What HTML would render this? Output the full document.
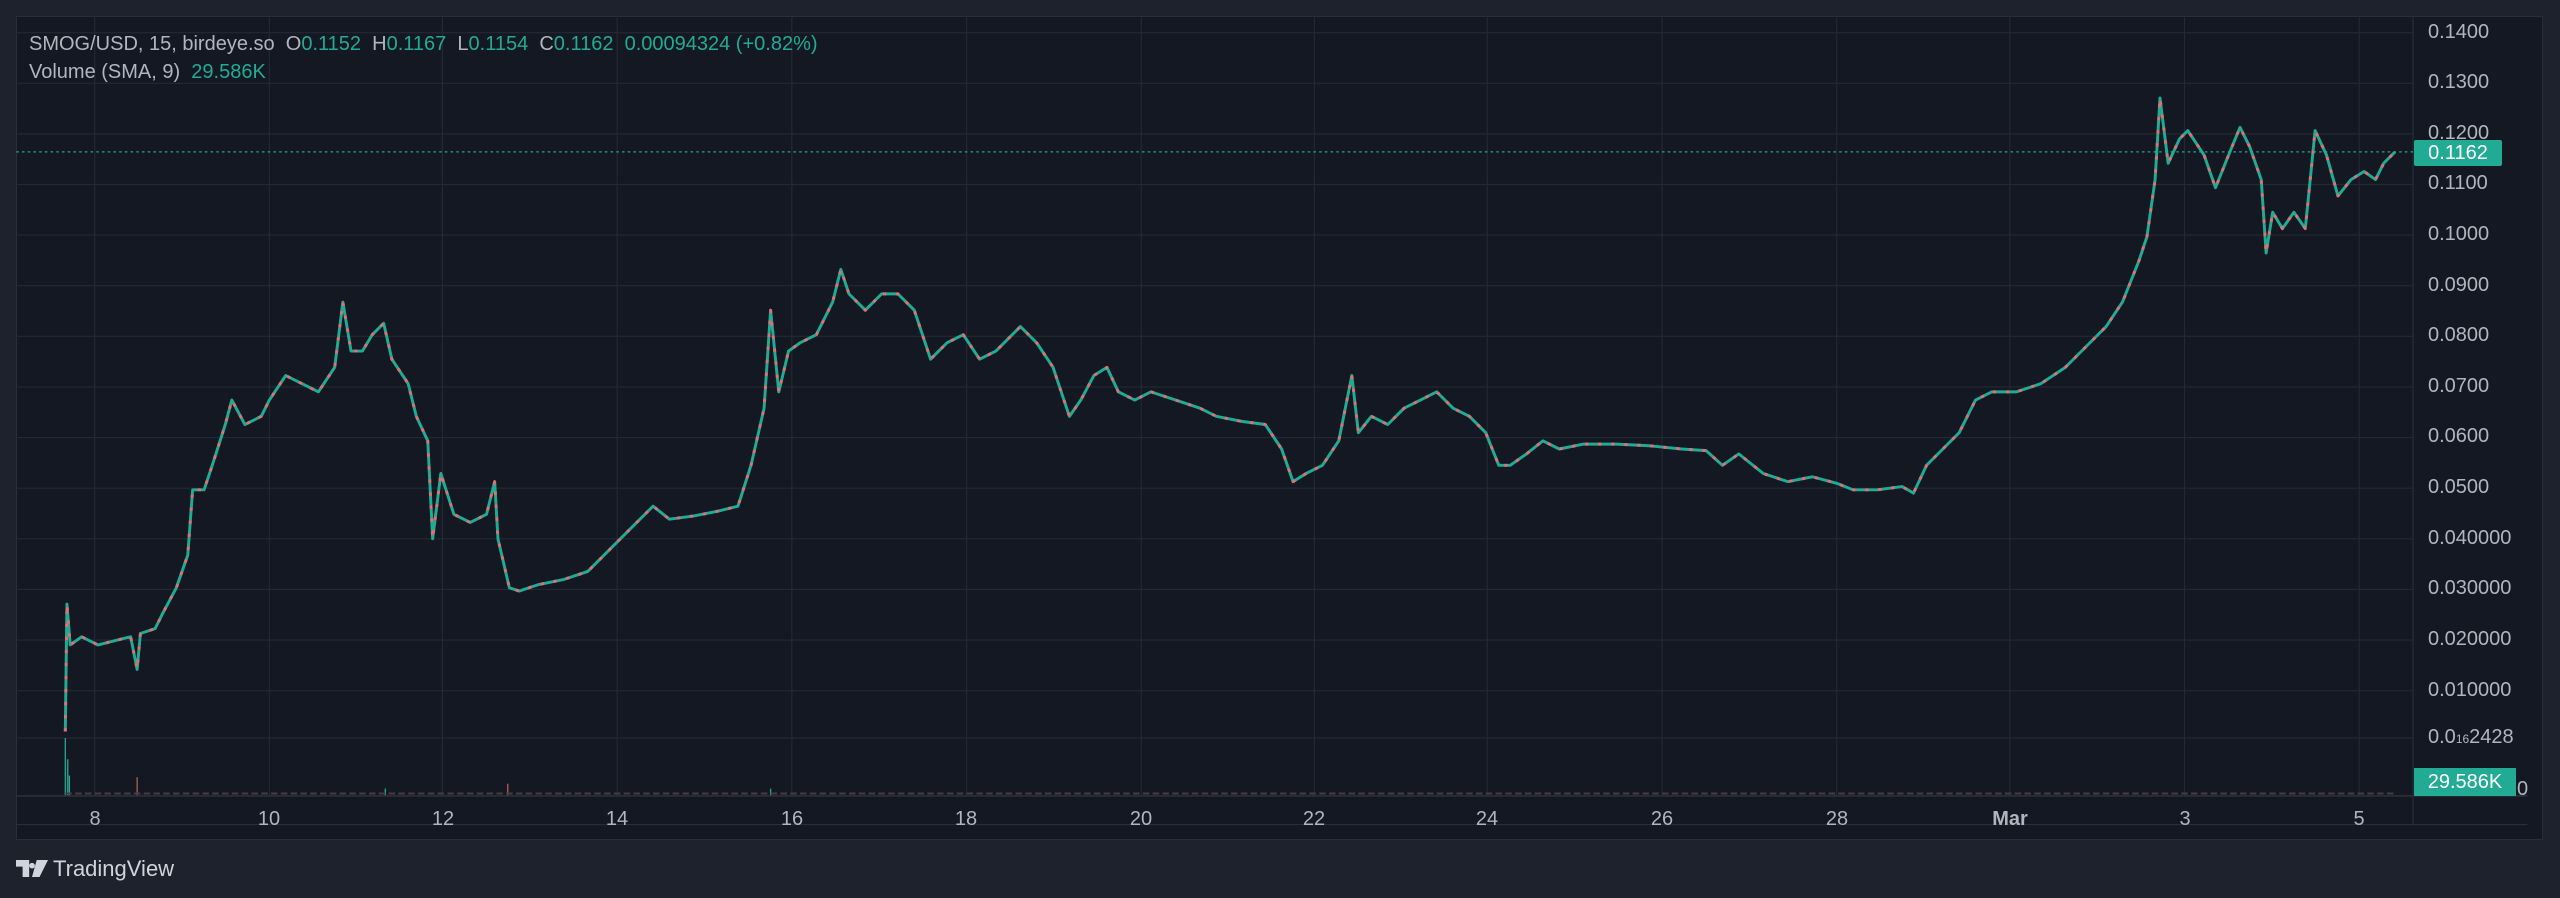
<!DOCTYPE html>
<html><head><meta charset="utf-8"><style>
html,body{margin:0;padding:0;width:2560px;height:898px;background:#1e222d;overflow:hidden;font-family:"Liberation Sans",sans-serif}
.panel{position:absolute;left:16px;top:16px;width:2527px;height:824px;background:#141823;border:1px solid #2a2e39;box-sizing:border-box}
.t{position:absolute;color:#b2b5be;font-size:20px;white-space:nowrap}
.g{color:#22ab94}
.ax{position:absolute;left:2428px;color:#b2b5be;font-size:20px}
.tl{position:absolute;top:808px;color:#b2b5be;font-size:20px;transform:translateX(-50%)}
</style></head><body>
<div class="panel"></div>
<svg style="position:absolute;left:0;top:0" width="2560" height="898" viewBox="0 0 1568 550" preserveAspectRatio="none">
<defs>
<polyline id="p" points="40,448 41,370 43,395 50,390 60,395 80,390 84,410 86,388 95,385 100,375 108,360 115,340 118,300 125,300 130,285 138,260 142,245 150,260 160,255 165,245 175,230 185,235 195,240 205,225 210,185 215,215 222,215 228,205 235,198 240,220 250,235 255,255 262,270 265,330 270,290 278,315 288,320 298,315 303,295 305,330 312,360 318,362 330,358 345,355 360,350 375,335 390,320 400,310 410,318 425,316 440,313 452,310 460,285 468,250 472,190 477,240 483,215 490,210 500,205 510,185 515,165 520,180 530,190 540,180 550,180 560,190 570,220 580,210 590,205 600,220 610,215 620,205 625,200 635,210 645,225 655,255 662,245 670,230 678,225 685,240 695,245 705,240 720,245 735,250 745,255 760,258 775,260 785,275 792,295 800,290 810,285 820,270 828,230 832,265 840,255 850,260 860,250 870,245 880,240 890,250 900,255 910,265 918,285 925,285 935,278 945,270 955,275 970,272 990,272 1010,273 1030,275 1045,276 1055,285 1065,278 1080,290 1095,295 1110,292 1125,296 1135,300 1150,300 1165,298 1172,302 1180,285 1190,275 1200,265 1210,245 1220,240 1235,240 1250,235 1265,225 1280,210 1290,200 1300,185 1310,160 1315,145 1320,110 1323,60 1328,100 1335,85 1340,80 1350,95 1357,115 1365,95 1372,78 1378,90 1385,110 1388,155 1392,130 1398,140 1405,130 1412,140 1418,80 1425,95 1432,120 1440,110 1448,105 1455,110 1460,100 1467,93"/>
</defs>
<g stroke="#242833" stroke-width="0.7">
<line x1="10" y1="20" x2="1478" y2="20"/><line x1="10" y1="51" x2="1478" y2="51"/><line x1="10" y1="82" x2="1478" y2="82"/><line x1="10" y1="113" x2="1478" y2="113"/><line x1="10" y1="144" x2="1478" y2="144"/><line x1="10" y1="175" x2="1478" y2="175"/><line x1="10" y1="206" x2="1478" y2="206"/><line x1="10" y1="237" x2="1478" y2="237"/><line x1="10" y1="268" x2="1478" y2="268"/><line x1="10" y1="299" x2="1478" y2="299"/><line x1="10" y1="330" x2="1478" y2="330"/><line x1="10" y1="361" x2="1478" y2="361"/><line x1="10" y1="392" x2="1478" y2="392"/><line x1="10" y1="423" x2="1478" y2="423"/><line x1="10" y1="452" x2="1478" y2="452"/>
<line x1="58" y1="10" x2="58" y2="487"/><line x1="165" y1="10" x2="165" y2="487"/><line x1="271" y1="10" x2="271" y2="487"/><line x1="378" y1="10" x2="378" y2="487"/><line x1="485" y1="10" x2="485" y2="487"/><line x1="592" y1="10" x2="592" y2="487"/><line x1="699" y1="10" x2="699" y2="487"/><line x1="805" y1="10" x2="805" y2="487"/><line x1="911" y1="10" x2="911" y2="487"/><line x1="1018" y1="10" x2="1018" y2="487"/><line x1="1125" y1="10" x2="1125" y2="487"/><line x1="1231" y1="10" x2="1231" y2="487"/><line x1="1338" y1="10" x2="1338" y2="487"/><line x1="1445" y1="10" x2="1445" y2="487"/>
</g>
<line x1="10" y1="487.5" x2="1548" y2="487.5" stroke="#363a45" stroke-width="0.7"/>
<line x1="1478" y1="10" x2="1478" y2="505" stroke="#2a2e39" stroke-width="0.7"/>
<line x1="10" y1="505" x2="1548" y2="505" stroke="#2a2e39" stroke-width="0.7"/>
<g fill="none" stroke-linejoin="round">
<use href="#p" stroke="#22ab94" stroke-width="1.8"/>
<use href="#p" stroke="#e46f6f" stroke-dasharray="2 6" stroke-width="1.8"/>
</g>
<g stroke="#22ab94" stroke-width="0.8"><line x1="40" y1="487" x2="40" y2="452"/><line x1="41.5" y1="487" x2="41.5" y2="465"/><line x1="42.5" y1="487" x2="42.5" y2="475"/><line x1="236" y1="487" x2="236" y2="483"/><line x1="472" y1="487" x2="472" y2="483"/></g>
<g stroke="#b45b5b" stroke-width="0.8"><line x1="84" y1="487" x2="84" y2="476"/><line x1="311" y1="487" x2="311" y2="480"/></g>
<line x1="40" y1="486" x2="1467" y2="486" stroke="#4a3a42" stroke-width="1.2" stroke-dasharray="4 2"/>
<line x1="10" y1="93" x2="1478" y2="93" stroke="#22ab94" stroke-width="0.8" stroke-dasharray="1.5 2"/>
</svg>
<div class="t" style="left:29px;top:33px">SMOG/USD, 15, birdeye.so&nbsp; O<span class="g">0.1152</span>&nbsp; H<span class="g">0.1167</span>&nbsp; L<span class="g">0.1154</span>&nbsp; C<span class="g">0.1162</span>&nbsp; <span class="g">0.00094324 (+0.82%)</span></div>
<div class="t" style="left:29px;top:61px">Volume (SMA, 9)&nbsp; <span class="g">29.586K</span></div>
<div class="ax" style="top:21px">0.1400</div><div class="ax" style="top:71px">0.1300</div><div class="ax" style="top:122px">0.1200</div><div class="ax" style="top:172px">0.1100</div><div class="ax" style="top:223px">0.1000</div><div class="ax" style="top:274px">0.0900</div><div class="ax" style="top:324px">0.0800</div><div class="ax" style="top:375px">0.0700</div><div class="ax" style="top:425px">0.0600</div><div class="ax" style="top:476px">0.0500</div><div class="ax" style="top:527px">0.040000</div><div class="ax" style="top:577px">0.030000</div><div class="ax" style="top:628px">0.020000</div><div class="ax" style="top:679px">0.010000</div>
<div class="ax" style="top:726px">0.0<span style="font-size:12px">16</span>2428</div>
<div style="position:absolute;left:2414px;top:140px;width:88px;height:26px;background:#22ab94;border-radius:2px;color:#fff;font-size:20px;line-height:26px;text-align:center">0.1162</div>
<div style="position:absolute;left:2414px;top:768px;width:102px;height:28px;background:#22ab94;color:#fff;font-size:20px;line-height:28px;text-align:center">29.586K</div>
<div class="ax" style="left:2517px;top:778px">0</div>
<div class="tl" style="left:95px">8</div><div class="tl" style="left:269px">10</div><div class="tl" style="left:443px">12</div><div class="tl" style="left:617px">14</div><div class="tl" style="left:792px">16</div><div class="tl" style="left:966px">18</div><div class="tl" style="left:1141px">20</div><div class="tl" style="left:1314px">22</div><div class="tl" style="left:1487px">24</div><div class="tl" style="left:1662px">26</div><div class="tl" style="left:1837px">28</div><div class="tl" style="left:2010px;font-weight:bold">Mar</div><div class="tl" style="left:2185px">3</div><div class="tl" style="left:2359px">5</div>
<svg style="position:absolute;left:16px;top:860px" width="32" height="17" viewBox="0 0 34 18"><path d="M0 0h14v18h-7v-11h-7z M17 3a3 3 0 1 0 0.1 0z M22 0h12l-9 18h-8z" fill="#d1d4dc"/></svg>
<div class="t" style="left:53px;top:856px;font-size:22px;color:#d1d4dc">TradingView</div>
</body></html>
